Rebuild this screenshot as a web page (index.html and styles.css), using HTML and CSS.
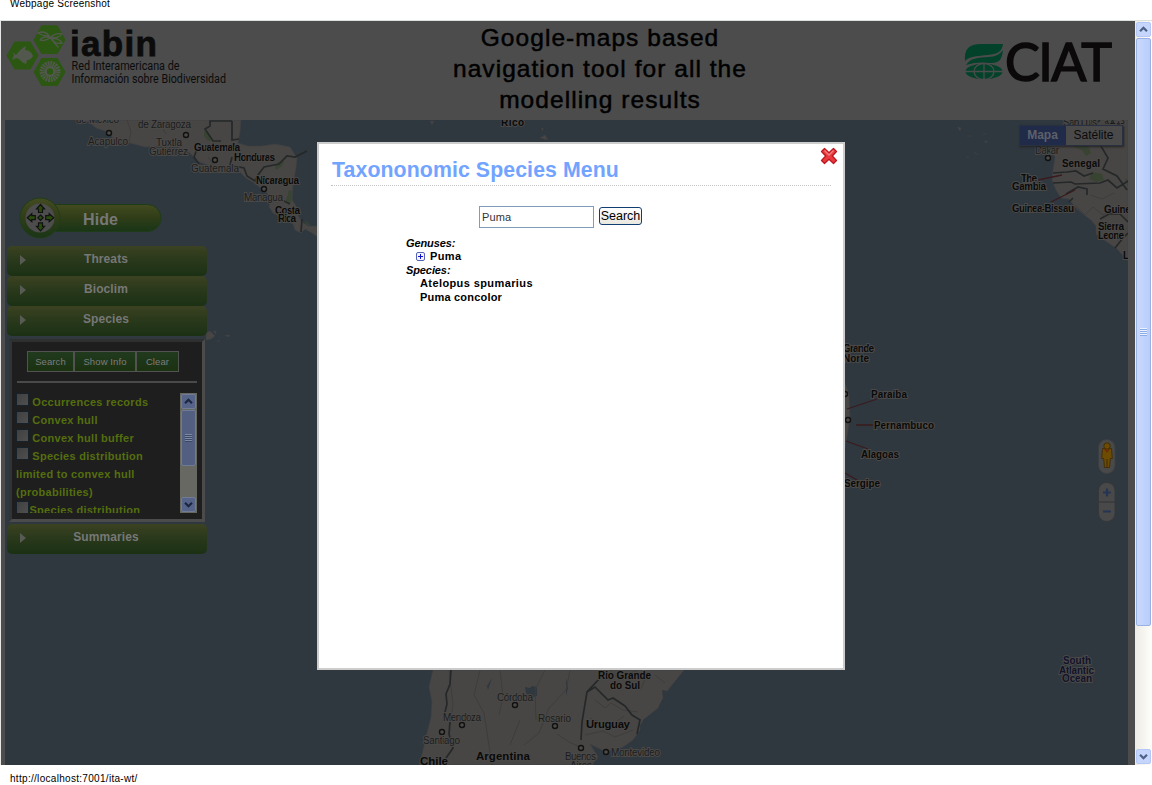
FILE: index.html
```html
<!DOCTYPE html>
<html lang="en">
<head>
<meta charset="utf-8">
<title>Taxonomic navigation tool</title>
<link rel="stylesheet" href="styles.css">
</head>
<body>
<div class="caption caption-top"><span>Webpage Screenshot</span></div>
<div class="viewport">
  <div class="page">
    <header class="header">
      <svg class="iabin" width="230" height="70" viewBox="5 21 230 70">
        <g fill="#2b5713">
          <path d="M33.5 40l8-14.700h16l8 14.700-8 14h-16z"/>
          <path d="M6.500 55.500l8-14h16l8 14-8 14h-16z"/>
          <path d="M33.500 72l8-14h16l8 14-8 14h-16z"/>
        </g>
        <path d="M12 52l4 3c3-4 6-7 10-9l-1 4c4 0 7 3 8 6-1 2-3 4-6 4l-1 4c-3-1-5-3-7-5l-3-1-4 2 2-5z" fill="#53584f"/>
        <g fill="none" stroke="#53584f" stroke-width="1.300" stroke-linecap="round"><path d="M48 35l10 12"/><path d="M49 36c-4 0-8-1-11-3 4-2 9-1 11 3zM50 38c-3 2-7 3-10 2 2-3 6-4 10-2zM51 37c3-3 7-4 11-3-2 3-7 5-11 3zM52 39c4-1 8 1 10 4-4 1-8 0-10-4z"/></g>
        <circle cx="50" cy="71.500" r="7.500" fill="none" stroke="#53584f" stroke-width="6" stroke-dasharray="1.6 .76"/>
        <circle cx="50" cy="71.500" r="4.200" fill="none" stroke="#53584f" stroke-width="2"/>
        <g fill="#0b0b0b">
          <text x="70" y="56" font-size="35" font-weight="bold" textLength="87" stroke="#0b0b0b" stroke-width=".8">iabin</text>
          <text class="robo" x="71.500" y="69.500" font-size="12" textLength="108" lengthAdjust="spacingAndGlyphs">Red Interamericana de</text>
          <text class="robo" x="71.500" y="83" font-size="12" textLength="154.500" lengthAdjust="spacingAndGlyphs">Información sobre Biodiversidad</text>
        </g>
      </svg>
      <h1 class="headline">Google-maps based<br>navigation tool for all the<br>modelling results</h1>
      <svg class="ciat" width="158" height="60" viewBox="960 34 158 60">
        <g fill="#03422a">
          <path d="M965 61c-1-12 4-17 16-17h22c-1 8-6 10-15 11-10 1-18 1-23 6z"/>
          <path d="M966 65c5-8 14-7 22-8 8 0 12-3 15-7-1 9-3 13-12 13-9-1-16-1-25 2z"/>
          <ellipse cx="984" cy="71.500" rx="18.500" ry="7.800"/>
        </g>
        <g fill="none" stroke="#4c4c4c" stroke-width="1.300"><path d="M965 71.500h38M984 63v17"/><ellipse cx="984" cy="71.500" rx="10" ry="8"/></g>
        <text class="lato" x="1005" y="81" font-size="52" fill="#0b0909" textLength="107" stroke="#0b0909" stroke-width="1.500">CIAT</text>
      </svg>
    </header>
    <main class="map">
      <svg class="tiles" width="1123" height="645" viewBox="5 120 1123 645">
        <g fill="#484644" stroke="#3e4142" stroke-width=".7">
          <path d="M86 120L96 128 105 131 113 138 130 143 145 147 165 146 178 147 190 153 197 161 205 164 215 168 230 170 240 172 246 178 254 183 262 189 268 194 271 200 269 207 273 213 286 220 293 224 295 230 301 233 305 229 312 233 318 237V226L308 226 302 222 298 215 296 206 292 200 293 185 296 168 297 158 290 147 275 144 262 146 248 146 238 143 240 132 241 120z"/>
          <path d="M1066 120l-6 9-7 13-2 9 4 6-2 13-1 10 4 10 5 8 8 1 7 9 7 6 8 6 5 6 0 8 11 8 9 6 12 13V120z"/>
          <path d="M433 670l-4 17 3 15-1 15-4 16-4 17-4 15h173l6-8-8-13 14 7 10-1 9-3 10-7 7-10 3-10 15-12 10-18 16-20z"/>
          <path d="M845 383l4 12 1 23-3 18-2 12z"/>
          <path d="M206 333l4-2 5 5-4 3-5 1zM213 331h3v3zM225 335h5l-2 2zM217 341h3zM957 127l4 1-1 3zM967 136h4zM983 134h3zM984 141h3v2zM974 152l4 3zM966 157h3zM540 138l5-3 3 5zM541 128h2v3zM430 121h4l-2 4z"/>
        </g>
        <g fill="#2f373f">
          <path d="M525 687l5 1 2-2 5 1v9l-6 2-5-5zM662 690l5 1 2 5-5 5-1 10-4-5 4-8zM492 678l-5 8 1 4zM566 678v18l2-8zM645 719l-5 6 1 8 6-10z"/>
        </g>
        <g fill="#384332">
          <path d="M204 131l6 4 3 5-5 1-4-5zM278 162l6-1-2 5-6 4-1-3zM289 190l3 1-1 12-5-2zM304 219l7 7-4-1zM1074 138l8-2 4 3-6 4 8 3 3 7-5 3-4-6-8-3zM1092 172l10 2 2 6-8 2-7-3zM1125 178l3 2v6z"/>
        </g>
        <g fill="none" stroke="#3d3d3c" stroke-width="1">
          <path d="M127 120l4 12-2 10M158 120l8 14M208 157l7 10M449 670l4 34-3 20M480 670l-6 25 10 18 8 52M500 670l3 27-4 18M520 720l-10 25M545 670l-10 20 1 30M570 670l-4 20-17 18-10 25-15 12M557 734l12 8 11 5M595 700l10 8 6-5 12 7 15 2M590 718l20 8 14-10M585 735l18-4 12 6 18-7M610 670l8 8 20-8M640 690l8-16M1075 205l10 10 8-8 10 8 12-8M1080 125l14 12 8-10M1090 195l12 4 12-6M655 675l10 8"/>
        </g>
        <g fill="none" stroke="#252829" stroke-width="1.700">
          <path d="M232 121h-22v5l-5 3 8 12h8M232 121v19l7-1M199 164l-5-7 3-8M232 157l-2 8 14 3 3 8 8 5 3-6 6-8 15-3 8-8 8 1 12-6M290 204l-8-4M302 219l-1 13M451 670l-1 14-4 10 1 10-3 12 6 6-1 12 4 14-7 10-2 8M581 740l1-18 3-18 2-12 13-14M587 692l8-5 13 13 5-2 12 8 7 9 8 5-3 14M1053 173l14-1 9-1 8 5 9-3M1053 183l18-1 4 2 25-1 8-3 9 8 11-7M1073 198l-4 4M1100 120l-12 10 10 11 10 17-5 11 14 7 10 14M1066 194l12-7 9 2v6M1100 219l9-5h11l8 8M1115 248l8-10 5-5"/>
        </g>
        <g fill="none" stroke="#3a1b1e" stroke-width="1.300"><path d="M1038 180l24-5M1051 202l24-12M847 409l30-10M856 425h17M846 441l22 8M845 473l12 7"/></g>
        <g fill="#4c4b49" stroke="#111" stroke-width="1.400">
          <circle cx="109" cy="133" r="2.500"/><circle cx="186" cy="135" r="2.500"/><circle cx="215" cy="160" r="2.500"/><circle cx="264" cy="189" r="2.500"/><circle cx="1048" cy="158" r="2.500"/><circle cx="845" cy="394" r="2.500"/><circle cx="848" cy="420" r="2.500"/><circle cx="515" cy="705" r="2.500"/><circle cx="462" cy="725" r="2.500"/><circle cx="442" cy="732" r="2.500"/><circle cx="555" cy="726" r="2.500"/><circle cx="581" cy="748" r="2.500"/><circle cx="606" cy="752" r="2.500"/>
        </g>
        <g class="city">
          <text x="76" y="122.500" textLength="43">de México</text>
          <text x="138" y="128" textLength="53">de Zaragoza</text>
          <text x="88" y="145" textLength="40">Acapulco</text>
          <text x="156" y="145.500" textLength="26">Tuxtla</text>
          <text x="149" y="155" textLength="39">Gutiérrez</text>
          <text x="191" y="172" textLength="48">Guatemala</text>
          <text x="244" y="201" textLength="39">Managua</text>
          <text x="1035" y="154" textLength="24">Dakar</text>
          <text x="1063" y="126" textLength="34">San Luis</text>
          <text x="1104" y="124" textLength="22">كيفة</text>
          <text x="497" y="701" textLength="36">Córdoba</text>
          <text x="443" y="721" textLength="38">Mendoza</text>
          <text x="538" y="722" textLength="33">Rosario</text>
          <text x="423" y="744" textLength="37">Santiago</text>
          <text x="565" y="760" textLength="31">Buenos</text>
          <text x="570" y="769" textLength="22">Aires</text>
          <text x="611" y="756" textLength="49">Montevideo</text>
        </g>
        <g class="country">
          <text x="194" y="151" textLength="46">Guatemala</text>
          <text x="234" y="161" textLength="41">Honduras</text>
          <text x="256" y="184" textLength="43">Nicaragua</text>
          <text x="275" y="213.500" textLength="25">Costa</text>
          <text x="278" y="222" textLength="18">Rica</text>
          <text x="501" y="126" textLength="23">Rico</text>
          <text x="1062" y="167" textLength="38">Senegal</text>
          <text x="1021" y="181.500" textLength="16">The</text>
          <text x="1012" y="190" textLength="34">Gambia</text>
          <text x="1012" y="212" textLength="62">Guinea-Bissau</text>
          <text x="1104" y="213" textLength="32">Guinea</text>
          <text x="1098" y="230" textLength="26">Sierra</text>
          <text x="1098" y="239" textLength="26">Leone</text>
          <text x="1123" y="259">Liberia</text>
          <text x="843" y="352" textLength="31">Grande</text>
          <text x="843" y="361.500" textLength="26">Norte</text>
          <text x="871" y="398" textLength="36">Paraíba</text>
          <text x="874" y="429" textLength="60">Pernambuco</text>
          <text x="861" y="458" textLength="38">Alagoas</text>
          <text x="844" y="487" textLength="36">Sergipe</text>
          <text x="598" y="679" textLength="53">Rio Grande</text>
          <text x="610" y="689" textLength="30">do Sul</text>
        </g>
        <g class="country big">
          <text x="586" y="728" textLength="44">Uruguay</text>
          <text x="476" y="760" textLength="54">Argentina</text>
          <text x="420" y="765" textLength="28">Chile</text>
        </g>
        <g class="country sea">
          <text x="1063" y="664" textLength="28">South</text>
          <text x="1059" y="673.500" textLength="35">Atlantic</text>
          <text x="1062" y="682" textLength="30">Ocean</text>
        </g>
      </svg>

      <div class="maptype"><span class="type on">Mapa</span><span class="type">Satélite</span></div>
      <div class="controls">
        <svg width="18" height="36" viewBox="0 0 18 36"><rect x=".5" y=".5" width="16.500" height="34" rx="8" fill="#494949" stroke="#3b3e41"/><path d="M4.500 9.500h9l.8 10h-2l-.8 9h-5l-.8-9h-2z" fill="#6d4b00" stroke="#3d2c08" stroke-width=".9"/><circle cx="9" cy="7" r="3.200" fill="#6d4b00" stroke="#3d2c08" stroke-width=".9"/><path d="M6 10h6l-3 4z" fill="#6b2c08"/><path d="M9 20v8" stroke="#3d2c08"/></svg>
        <svg width="18" height="41" viewBox="0 0 18 41"><rect x=".5" y=".5" width="16.500" height="39" rx="8" fill="#494949" stroke="#34383b"/><path d="M1 20h16" stroke="#303335"/><path d="M5 10.500h8M9 6.500v8M5 29.500h8" stroke="#263454" stroke-width="2.200"/></svg>
      </div>

      <aside class="sidebar">
        <svg class="hide" width="160" height="44" viewBox="15 196 160 44">
          <defs>
            <linearGradient id="pill" x2="0" y2="1"><stop offset="0" stop-color="#434b20"/><stop offset=".45" stop-color="#313e18"/><stop offset="1" stop-color="#193516"/></linearGradient>
          </defs>
          <rect x="32" y="204.500" width="129" height="27" rx="13.500" fill="url(#pill)" stroke="#1e3c17"/>
          <circle cx="40" cy="218" r="20" fill="url(#pill)" stroke="#203d19"/>
          <circle cx="40" cy="218" r="14.500" fill="#4d4d4d"/>
          <g fill="#294b0c" stroke="#111" stroke-width="1.200"><path id="arr" d="M40.500 204.500l4 4.500h-2v3.500h-4V209h-2z"/><use href="#arr" transform="rotate(90 40.500 217.700)"/><use href="#arr" transform="rotate(180 40.500 217.700)"/><use href="#arr" transform="rotate(270 40.500 217.700)"/><path d="M40.500 215l2.700 2.700-2.700 2.700-2.700-2.700z"/></g>
          <text x="83" y="225" font-size="16" font-weight="bold" fill="#777" textLength="35">Hide</text>
        </svg>
        <div class="item"><i class="tri"></i>Threats</div>
        <div class="item"><i class="tri"></i>Bioclim</div>
        <div class="item"><i class="tri"></i>Species</div>
        <section class="panel">
          <div class="buttons"><span class="btn b1">Search</span><span class="btn b2">Show Info</span><span class="btn b3">Clear</span></div>
          <div class="layers">
            <div class="layerlist">
              <div><i class="cb"></i> Occurrences records</div>
              <div><i class="cb"></i> Convex hull</div>
              <div><i class="cb"></i> Convex hull buffer</div>
              <div><i class="cb"></i> Species distribution<br>limited to convex hull<br>(probabilities)</div>
              <div><i class="cb tight"></i>Species distribution</div>
            </div>
            <div class="sb sb-dim">
              <svg class="sbtn" viewBox="0 0 15 15"><path d="M3.500 9.500l4-4 4 4" /></svg>
              <div class="thumb"><i class="grip"></i></div>
              <div class="fill"></div>
              <svg class="sbtn" viewBox="0 0 15 15"><path d="M3.500 5.500l4 4 4-4" /></svg>
            </div>
          </div>
        </section>
        <div class="item"><i class="tri"></i>Summaries</div>
      </aside>
    </main>

    <section class="dialog">
      <svg class="close" width="18" height="18" viewBox="0 0 18 18"><path d="M4.500 1.500L9 5.700l4.500-4.200 3 3L12.300 9l4.200 4.500-3 3L9 12.300l-4.500 4.200-3-3L5.700 9 1.500 4.500z" fill="#e93a3f" stroke="#bd1820" stroke-width="1.300" stroke-linejoin="round"/><path d="M4.500 3.500L9 8l4.500-4.500" fill="none" stroke="#f38082" stroke-width="1.300"/></svg>
      <h2 class="title">Taxononomic Species Menu</h2>
      <div class="search"><span class="field">Puma</span><span class="go">Search</span></div>
      <div class="results">
        <div class="group">Genuses:</div>
        <div class="genus"><svg width="9" height="9" viewBox="0 0 9 9"><rect x=".5" y=".5" width="8" height="8" rx="1.500" fill="#f4f5ff" stroke="#5563b4"/><path d="M2 4.500h5M4.500 2v5" stroke="#1111d0"/></svg>Puma</div>
        <div class="group">Species:</div>
        <div class="leaf">Atelopus spumarius</div>
        <div class="leaf">Puma concolor</div>
      </div>
    </section>
  </div>
  <div class="sb sb-main">
    <svg class="sbtn" viewBox="0 0 15 15"><path d="M3.500 9.500l4-4 4 4" /></svg>
    <div class="thumb"><i class="grip"></i></div>
    <div class="fill"></div>
    <svg class="sbtn" viewBox="0 0 15 15"><path d="M3.500 5.500l4 4 4-4" /></svg>
  </div>
</div>
<div class="caption caption-bottom"><span>http://localhost:7001/ita-wt/</span></div>
</body>
</html>
```
FILE: styles.css
```css
* { box-sizing: border-box; }
body { margin: 0; width: 1152px; height: 785px; overflow: hidden; background: #fff; font-family: "Liberation Sans", Arial, sans-serif; display: flex; flex-direction: column; }
.caption { padding-left: 10px; font-size: 10px; color: #000; white-space: nowrap; flex: none; }
.caption-top { height: 20px; line-height: 10px; letter-spacing: .23px; }
.caption-top span { display: block; margin-top: -1px; }
.caption-bottom { height: 20px; line-height: 27px; letter-spacing: .3px; }
.viewport { height: 745px; flex: none; display: flex; border-top: 1px solid #dde1dd; border-left: 1px solid #e6e6e6; }
.page { position: relative; width: 1134px; height: 744px; padding-left: 4px; background: #4c4c4c; overflow: hidden; flex: none; }
.header { height: 99px; display: flex; }
.iabin { flex: none; }
.robo { font-family: Roboto, sans-serif; }
.lato { font-family: Lato, sans-serif; }
.headline { margin: 1px 0 0 205px; width: 320px; font-size: 24.5px; line-height: 31px; font-weight: 400; letter-spacing: 1.05px; text-align: center; color: #000; white-space: nowrap; -webkit-text-stroke: .5px #000; }
.ciat { margin: 13px 0 0 200px; flex: none; }
.map { position: relative; width: 1123px; height: 645px; background: #2f373f; }
.tiles { display: block; }
.city text { font-size: 10px; fill: #1c1c1c; stroke: #4a4947; stroke-width: 2px; paint-order: stroke; }
.country text { font-size: 10px; font-weight: bold; fill: #0a0a0a; stroke: #4a4947; stroke-width: 2px; paint-order: stroke; }
.country.big text { font-size: 11.5px; }
.country.sea text { fill: #12122a; }

.maptype { position: absolute; left: 1014px; top: 5px; display: flex; height: 21px; border: 1px solid #29303f; box-shadow: 1px 1px 2px #222; }
.type { width: 56px; line-height: 19px; text-align: center; font-size: 12px; background: #4a4a4a; color: #0b0b0b; padding-right: 1px; }
.type.on { width: 46px; background: #202b49; color: #5d6069; font-weight: bold; }
.controls { position: absolute; left: 1093px; top: 319px; display: flex; flex-direction: column; gap: 7px; }

.sidebar { position: absolute; left: 2px; top: 76px; width: 200px; }
.hide { display: block; margin: 0 0 6px 8px; }
.item { position: relative; height: 30px; line-height: 26px; padding-right: 2px; text-align: center; font-size: 12px; font-weight: bold; letter-spacing: .1px; color: #777; background: linear-gradient(#3b4222, #2a391b 45%, #1b3114); border-radius: 5px; }
.tri { position: absolute; left: 13px; top: 9px; border-left: 6px solid #575b53; border-top: 5.5px solid transparent; border-bottom: 5.5px solid transparent; }
.panel { margin: 3px 0 2px 2px; width: 196px; height: 183px; background: #1e1e1e; border: 3px solid; border-color: #2e3030 #4b4b4b #4b4b4b #303437; padding: 9px 4px 0 5px; }
.buttons { display: flex; height: 32px; padding-left: 10px; margin-right: 1px; border-bottom: 2px solid #4a4a4a; }
.btn { height: 21px; line-height: 19px; border: 1px solid #505350; background: linear-gradient(#213a1e, #1b3211); color: #7d7d7d; font-size: 9.5px; letter-spacing: .1px; text-align: center; }
.b1 { width: 47px; } .b2 { width: 62px; } .b3 { width: 43px; }
.layers { margin: 10px 1px 0 -1px; display: flex; height: 120px; overflow: hidden; }
.layerlist { width: 164px; flex: none; height: 120px; overflow: hidden; font-size: 11px; font-weight: bold; line-height: 18px; color: #556e0e; letter-spacing: .28px; white-space: nowrap; }
.cb { display: inline-block; width: 13px; height: 13px; margin: -4px 0 0; border: 1px solid #17212a; background: linear-gradient(135deg, #404040, #4f4f4f); vertical-align: 0; }
.tight { margin-right: .5px; }

.sb { width: 17px; display: flex; flex-direction: column; align-items: center; padding: 1px; flex: none; }
.sb-main { background: linear-gradient(90deg, #edebe4, #fefefb); height: 744px; }
.sbtn { width: 15px; height: 15px; flex: none; background: #c5d5fc; border: 1px solid #b3c8f5; border-radius: 2px; fill: none; stroke: #4b6185; stroke-width: 2.6; }
.thumb { width: 15px; display: flex; align-items: center; justify-content: center; background: linear-gradient(90deg, #cad8fd, #b8cefb); border: 1px solid #98b2e6; border-radius: 2px; margin-top: 1px; flex: none; }
.grip { width: 7px; height: 8px; background: repeating-linear-gradient(#eaf1ff 0 1px, #8baae8 1px 2px); }
.fill { flex: 1; }
.sb-main .thumb { height: 588px; }
.sb-dim { height: 120px; background: #686863; }
.sb-dim .sbtn { background: #56648a; border-color: #707c96; stroke: #1b2641; }
.sb-dim .thumb { height: 56px; background: #535f80; border-color: #6e7a96; }
.sb-dim .grip { background: repeating-linear-gradient(#7d88a2 0 1px, #3b4866 1px 2px); }

.dialog { position: absolute; left: 316px; top: 121px; width: 528px; height: 528px; background: #fff; border: 2px solid #ccc; padding: 12px 12px 0; }
.close { position: absolute; right: 5px; top: 3px; }
.title { margin: 0; height: 30px; line-height: 28px; font-size: 21.3px; color: #72a4ff; border-bottom: 1px dotted #c4c4c4; padding-left: 1px; white-space: nowrap; letter-spacing: .09px; }
.search { display: flex; gap: 5px; margin: 20px 0 0 148px; height: 22px; }
.field { width: 115px; height: 22px; border: 1px solid #7f9db9; padding-left: 2px; font-size: 11px; line-height: 20px; letter-spacing: .1px; color: #333; }
.go { width: 43px; height: 18px; margin-top: 1px; border: 1px solid #123d70; border-radius: 3px; background: linear-gradient(#fff, #e9e8e0); font-size: 12.5px; line-height: 17px; text-align: center; color: #000; }
.results { margin: 8.5px 0 0 75px; font-size: 11px; font-weight: bold; line-height: 13.6px; letter-spacing: .4px; color: #000; }
.group { font-style: italic; letter-spacing: -.1px; }
.genus { padding-left: 10px; display: flex; align-items: center; gap: 5px; }
.leaf { padding-left: 14px; }
.leaf:last-child { letter-spacing: .2px; }
```
